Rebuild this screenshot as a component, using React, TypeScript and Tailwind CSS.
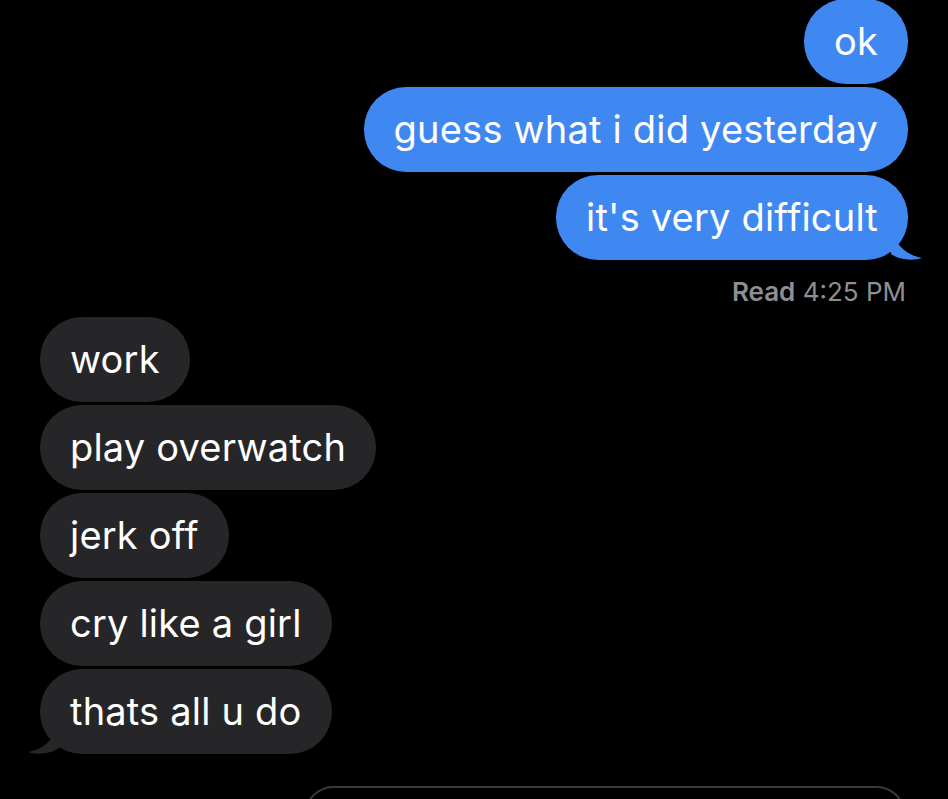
import React from 'react';

const font = { fontFamily: 'Inter, "Liberation Sans", Arial, sans-serif' };

function Tail({ side, color }: { side: 'left' | 'right'; color: string }) {
  if (side === 'right') {
    return (
      <svg
        className="absolute bottom-0 -right-[15px]"
        width="32"
        height="30"
        viewBox="0 0 32 30"
      >
        <path d="M0 0 C6 14 12 24 31 28 C22 31 8 30 0 24 Z" fill={color} />
      </svg>
    );
  }
  return (
    <svg
      className="absolute bottom-0 -left-[13px]"
      width="32"
      height="30"
      viewBox="0 0 32 30"
    >
      <path d="M32 0 C26 14 20 24 1 28 C10 31 24 30 32 24 Z" fill={color} />
    </svg>
  );
}

function Bubble({
  text,
  mine,
  tail,
}: {
  text: string;
  mine?: boolean;
  tail?: boolean;
}) {
  return (
    <div
      className={`relative h-[85px] flex items-center rounded-[42px] px-[30px] text-[38px] tracking-[0.2px] leading-none text-white ${
        mine ? 'bg-[#3f88f2]' : 'bg-[#262628]'
      }`}
    >
      <span className="relative z-10 -mt-[2px]">{text}</span>
      {tail && <Tail side={mine ? 'right' : 'left'} color={mine ? '#3f88f2' : '#262628'} />}
    </div>
  );
}

export default function App() {
  return (
    <div className="w-[948px] h-[799px] bg-black overflow-hidden flex flex-col" style={font}>
      <div className="flex flex-col items-end gap-[3px] pr-[40px] -mt-[1px]">
        <Bubble text="ok" mine />
        <Bubble text="guess what i did yesterday" mine />
        <Bubble text="it's very difficult" mine tail />
        <div className="mt-[16px] text-[26px] leading-none text-[#8e8e93] pr-[2px]">
          <span className="font-semibold">Read</span> 4:25 PM
        </div>
      </div>

      <div className="flex flex-col items-start gap-[3px] pl-[40px] mt-[12px]">
        <Bubble text="work" />
        <Bubble text="play overwatch" />
        <Bubble text="jerk off" />
        <Bubble text="cry like a girl" />
        <Bubble text="thats all u do" tail />
      </div>

      <div className="flex justify-end pr-[43px] mt-[32px]">
        <div className="w-[600px] h-[60px] rounded-t-[28px] border-2 border-b-0 border-[#3a3a3c]" />
      </div>
    </div>
  );
}
